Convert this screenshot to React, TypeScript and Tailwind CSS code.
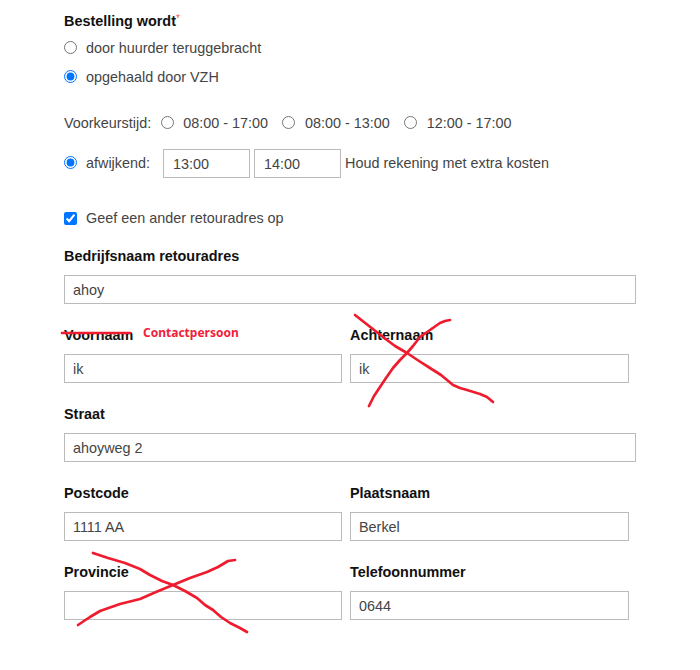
import React from 'react';

const scribbles = [
  'M62 333 L130 333',
  'M355 315 L369 326 L383 337 L395 346 L407 353 L419 361 L430 368 L441 375 L453 385 L460 388 L467 390 L480 394 L487 397 L493 402',
  'M450 320 L445 321 L440 323 L430 330 L420 337 L413 346 L407 353 L400 360 L393 368 L386 378 L380 387 L374 396 L369 406',
  'M93 553 L108 558 L125 563 L140 569 L150 575 L162 581 L173 585 L185 591 L197 598 L205 605 L213 610 L221 617 L230 623 L240 628 L247 632',
  'M235 560 L228 561 L218 567 L207 572 L190 578 L173 585 L156 592 L140 599 L120 604 L100 611 L90 617 L78 625',
];

const Field = ({ label, value = '', wide = false }: { label: string; value?: string; wide?: boolean }) => (
  <div className={wide ? 'col-span-2 w-[572px]' : ''}>
    <label className="block h-[19px] text-[14.4px] leading-[19px] font-bold text-[#111]">{label}</label>
    <input
      readOnly
      value={value}
      className="mt-[9px] block h-[29px] w-full border border-[#bbb] bg-white px-[8px] text-[14.4px] text-[#444] outline-none"
    />
  </div>
);

const Radio = ({ checked = false }: { checked?: boolean }) => (
  <input type="radio" readOnly checked={checked} className="m-0 mb-[2px] h-[13px] w-[13px] shrink-0" />
);

export default function App() {
  return (
    <div className="relative h-[670px] w-[700px] overflow-hidden bg-white font-['Liberation_Sans',Arial,sans-serif] text-[14.4px] text-[#444]">
      <form className="flex flex-col pl-[64px] pt-[12px]">
        <div className="h-[19px] leading-[19px] font-bold text-[#111]">
          Bestelling wordt<span className="align-top text-[10px] leading-[14px] font-normal text-[#e55]">*</span>
        </div>

        <div className="mt-[8px] flex h-[19px] items-center gap-[9px]">
          <Radio />
          <span>door huurder teruggebracht</span>
        </div>
        <div className="mt-[10px] flex h-[19px] items-center gap-[9px]">
          <Radio checked />
          <span>opgehaald door VZH</span>
        </div>

        <div className="mt-[27px] flex h-[19px] items-center">
          <span>Voorkeurstijd:</span>
          <span className="ml-[10px] flex items-center gap-[9px]"><Radio /><span>08:00 - 17:00</span></span>
          <span className="ml-[14px] flex items-center gap-[10px]"><Radio /><span>08:00 - 13:00</span></span>
          <span className="ml-[14px] flex items-center gap-[10px]"><Radio /><span>12:00 - 17:00</span></span>
        </div>

        <div className="mt-[16px] flex h-[29px] items-center">
          <Radio checked />
          <span className="ml-[9px] w-[77px]">afwijkend:</span>
          <input readOnly value="13:00" className="h-[29px] w-[87px] border border-[#bbb] px-[9px] outline-none" />
          <input readOnly value="14:00" className="ml-[4px] h-[29px] w-[87px] border border-[#bbb] px-[9px] outline-none" />
          <span className="ml-[4px]">Houd rekening met extra kosten</span>
        </div>

        <div className="mt-[31px] flex h-[19px] items-center gap-[9px]">
          <input type="checkbox" readOnly checked className="m-0 h-[13px] w-[13px] shrink-0" />
          <span>Geef een ander retouradres op</span>
        </div>

        <div className="mt-[19px] grid w-[565px] grid-cols-[278px_279px] gap-x-[8px] gap-y-[22px]">
          <Field wide label="Bedrijfsnaam retouradres" value="ahoy" />
          <div className="relative">
            <Field label="Voornaam" value="ik" />
            <span className="absolute left-[79px] top-[-3px] font-['Noto_Sans',sans-serif] text-[12px] leading-[19px] font-bold text-[#f0213a]">
              Contactpersoon
            </span>
          </div>
          <Field label="Achternaam" value="ik" />
          <Field wide label="Straat" value="ahoyweg 2" />
          <Field label="Postcode" value="1111 AA" />
          <Field label="Plaatsnaam" value="Berkel" />
          <Field label="Provincie" />
          <Field label="Telefoonnummer" value="0644" />
        </div>
      </form>

      {/* red pen marks drawn over the form */}
      <svg className="pointer-events-none absolute inset-0" width="700" height="670" fill="none" stroke="#ee1c2e" strokeWidth="2.7" strokeLinecap="round" strokeLinejoin="round">
        {scribbles.map((d, i) => (
          <path key={i} d={d} />
        ))}
      </svg>
    </div>
  );
}
